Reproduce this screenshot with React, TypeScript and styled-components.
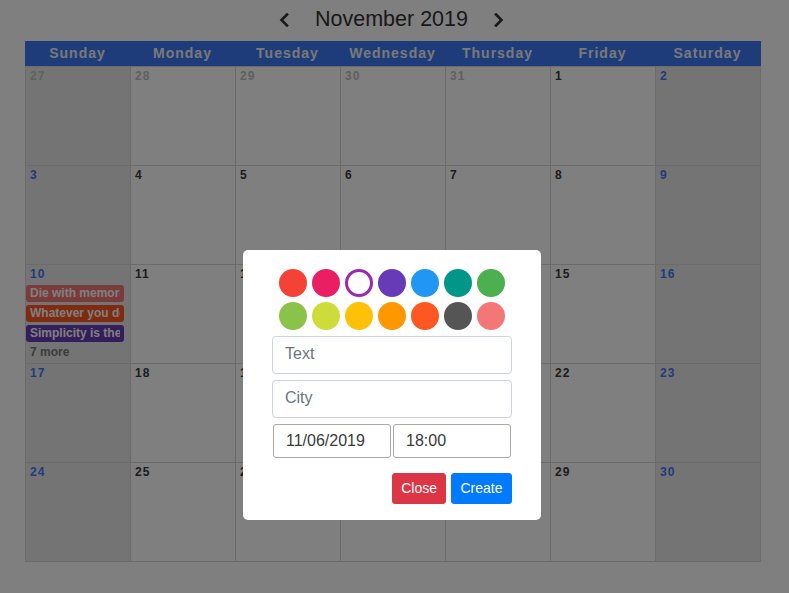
import React from 'react';
import styled, { createGlobalStyle } from 'styled-components';

const GlobalStyle = createGlobalStyle`
  html, body { margin: 0; padding: 0; background: #ffffff; }
  body { font-family: "Liberation Sans", Arial, sans-serif; }
  * { box-sizing: border-box; }
`;

const BLUE = '#3c78f5';
const LINE = '#d6d6d6';

const Page = styled.div`
  width: 789px;
  height: 593px;
  overflow: hidden;
  position: relative;
`;

const TitleBar = styled.div`
  height: 41px;
  display: flex;
  align-items: center;
  justify-content: center;
  gap: 25px;
  padding: 0 6px 2px 0;
`;

const NavButton = styled.button`
  border: none;
  background: transparent;
  padding: 0;
  width: 12px;
  height: 16px;
  display: flex;
  align-items: center;
  justify-content: center;
  color: #333;
  cursor: pointer;
`;

const Title = styled.h1`
  margin: 0;
  font-size: 21.5px;
  font-weight: 400;
  color: #333;
  line-height: 25px;
`;

const Calendar = styled.div`
  margin-left: 25px;
  width: 736px;
  border-right: 1px solid ${LINE};
  border-bottom: 1px solid ${LINE};
`;

const HeaderRow = styled.div`
  display: grid;
  grid-template-columns: repeat(7, 105px);
  height: 25px;
  background: ${BLUE};
  margin-right: -1px;
`;

const HeaderCell = styled.div`
  display: flex;
  align-items: center;
  justify-content: center;
  padding-bottom: 2px;
  color: #f2f2f2;
  font-size: 14px;
  font-weight: 700;
  letter-spacing: 1px;
`;

const WeekRow = styled.div`
  display: grid;
  grid-template-columns: repeat(7, 105px);
`;

const DayCell = styled.div<{ $weekend: boolean }>`
  height: 99px;
  border-left: 1px solid ${LINE};
  border-top: 1px solid ${LINE};
  background: ${(p) => (p.$weekend ? '#e9e9e9' : '#ffffff')};
  padding-top: 2px;
  overflow: hidden;
`;

const DayNum = styled.div<{ $tone: 'other' | 'normal' | 'weekend' }>`
  font-size: 12px;
  font-weight: 700;
  letter-spacing: 1px;
  line-height: 14px;
  padding-left: 4px;
  color: ${(p) => (p.$tone === 'other' ? '#c0c0c0' : p.$tone === 'weekend' ? BLUE : '#3a3a3a')};
`;

const EventList = styled.div`
  display: flex;
  flex-direction: column;
  gap: 3px;
  margin-top: 4px;
`;

const EventChip = styled.div<{ $color: string }>`
  width: 98px;
  height: 17px;
  border-radius: 3px;
  padding: 0 4px;
  background: ${(p) => p.$color};
`;

const EventText = styled.span`
  display: block;
  line-height: 17px;
  color: #ffffff;
  font-size: 12px;
  font-weight: 700;
  white-space: nowrap;
  overflow: hidden;
`;

const MoreLink = styled.div`
  font-size: 12px;
  font-weight: 700;
  line-height: 14px;
  color: #787878;
  padding-left: 4px;
  margin-top: 3px;
`;

const Overlay = styled.div`
  position: fixed;
  inset: 0;
  background: rgba(0, 0, 0, 0.5);
`;

const Modal = styled.div`
  position: absolute;
  left: 243px;
  top: 250px;
  width: 298px;
  height: 270px;
  background: #ffffff;
  border-radius: 5px;
  padding: 19px 29px 0;
  display: flex;
  flex-direction: column;
`;

const ColorGrid = styled.div`
  display: grid;
  grid-template-columns: repeat(7, 28px);
  grid-auto-rows: 28px;
  gap: 5px;
  justify-content: center;
`;

const Swatch = styled.div<{ $color: string; $selected?: boolean }>`
  width: 28px;
  height: 28px;
  border-radius: 50%;
  background: ${(p) => (p.$selected ? '#ffffff' : p.$color)};
  border: ${(p) => (p.$selected ? `3px solid ${p.$color}` : 'none')};
  cursor: pointer;
`;

const TextInput = styled.input`
  width: 240px;
  height: 38px;
  margin-top: 6px;
  padding: 5px 12px 7px;
  border: 1px solid #ced4da;
  border-radius: 4px;
  font-family: "Liberation Sans", Arial, sans-serif;
  font-size: 16px;
  color: #495057;
  outline: none;
  &::placeholder { color: #6c757d; }
`;

const DateRow = styled.div`
  display: flex;
  gap: 2px;
  margin-top: 6px;
  padding-left: 1px;
`;

const SmallInput = styled.input`
  width: 118px;
  height: 34px;
  padding: 0 12px;
  border: 1px solid #a9a9a9;
  border-radius: 3px;
  font-family: "Liberation Sans", Arial, sans-serif;
  font-size: 16px;
  color: #3a3a3a;
  background: #fff;
  outline: none;
`;

const Actions = styled.div`
  display: flex;
  justify-content: flex-end;
  gap: 5px;
  margin-top: 15px;
`;

const Button = styled.button<{ $variant: 'danger' | 'primary' }>`
  height: 31px;
  padding: 0 ${(p) => (p.$variant === 'primary' ? '8.5px' : '8px')};
  border: 1px solid ${(p) => (p.$variant === 'danger' ? '#dc3545' : '#007bff')};
  background: ${(p) => (p.$variant === 'danger' ? '#dc3545' : '#007bff')};
  color: #ffffff;
  border-radius: 3px;
  font-family: "Liberation Sans", Arial, sans-serif;
  font-size: 14px;
  line-height: 21px;
  cursor: pointer;
`;

const Chevron = ({ dir }: { dir: 'left' | 'right' }) => (
  <svg width="10" height="14" viewBox="0 0 10 14" fill="none">
    <polyline
      points={dir === 'left' ? '8,1.5 2.5,7 8,12.5' : '2,1.5 7.5,7 2,12.5'}
      stroke="currentColor"
      strokeWidth="2.6"
      strokeLinecap="square"
      strokeLinejoin="miter"
    />
  </svg>
);

const DAYS = ['Sunday', 'Monday', 'Tuesday', 'Wednesday', 'Thursday', 'Friday', 'Saturday'];

type Day = { n: number; other?: boolean };
const weeks: Day[][] = [
  [{ n: 27, other: true }, { n: 28, other: true }, { n: 29, other: true }, { n: 30, other: true }, { n: 31, other: true }, { n: 1 }, { n: 2 }],
  [3, 4, 5, 6, 7, 8, 9].map((n) => ({ n })),
  [10, 11, 12, 13, 14, 15, 16].map((n) => ({ n })),
  [17, 18, 19, 20, 21, 22, 23].map((n) => ({ n })),
  [24, 25, 26, 27, 28, 29, 30].map((n) => ({ n })),
];

const events: Record<number, { title: string; color: string }[]> = {
  10: [
    { title: 'Die with memories, not dreams', color: '#f47777' },
    { title: 'Whatever you do, do it well', color: '#ff5722' },
    { title: 'Simplicity is the ultimate sophistication', color: '#673ab7' },
  ],
};

const COLORS = [
  '#f44336', '#e91e63', '#9c27b0', '#673ab7', '#2196f3', '#009688', '#4caf50',
  '#8bc34a', '#cddc39', '#ffc107', '#ff9800', '#ff5722', '#555555', '#f47777',
];

export default function App() {
  return (
    <Page>
      <GlobalStyle />
      <TitleBar>
        <NavButton aria-label="previous"><Chevron dir="left" /></NavButton>
        <Title>November 2019</Title>
        <NavButton aria-label="next"><Chevron dir="right" /></NavButton>
      </TitleBar>
      <Calendar>
        <HeaderRow>
          {DAYS.map((d) => (
            <HeaderCell key={d}>{d}</HeaderCell>
          ))}
        </HeaderRow>
        {weeks.map((week, wi) => (
          <WeekRow key={wi}>
            {week.map((day, di) => {
              const weekend = di === 0 || di === 6;
              const tone = day.other ? 'other' : weekend ? 'weekend' : 'normal';
              const ev = !day.other ? events[day.n] : undefined;
              return (
                <DayCell key={di} $weekend={weekend}>
                  <DayNum $tone={tone}>{day.n}</DayNum>
                  {ev && (
                    <>
                      <EventList>
                        {ev.map((e) => (
                          <EventChip key={e.title} $color={e.color}>
                            <EventText>{e.title}</EventText>
                          </EventChip>
                        ))}
                      </EventList>
                      <MoreLink>7 more</MoreLink>
                    </>
                  )}
                </DayCell>
              );
            })}
          </WeekRow>
        ))}
      </Calendar>
      <Overlay>
        <Modal>
          <ColorGrid>
            {COLORS.map((c, i) => (
              <Swatch key={c + i} $color={c} $selected={i === 2} />
            ))}
          </ColorGrid>
          <TextInput placeholder="Text" />
          <TextInput placeholder="City" />
          <DateRow>
            <SmallInput readOnly value="11/06/2019" />
            <SmallInput readOnly value="18:00" />
          </DateRow>
          <Actions>
            <Button $variant="danger">Close</Button>
            <Button $variant="primary">Create</Button>
          </Actions>
        </Modal>
      </Overlay>
    </Page>
  );
}
